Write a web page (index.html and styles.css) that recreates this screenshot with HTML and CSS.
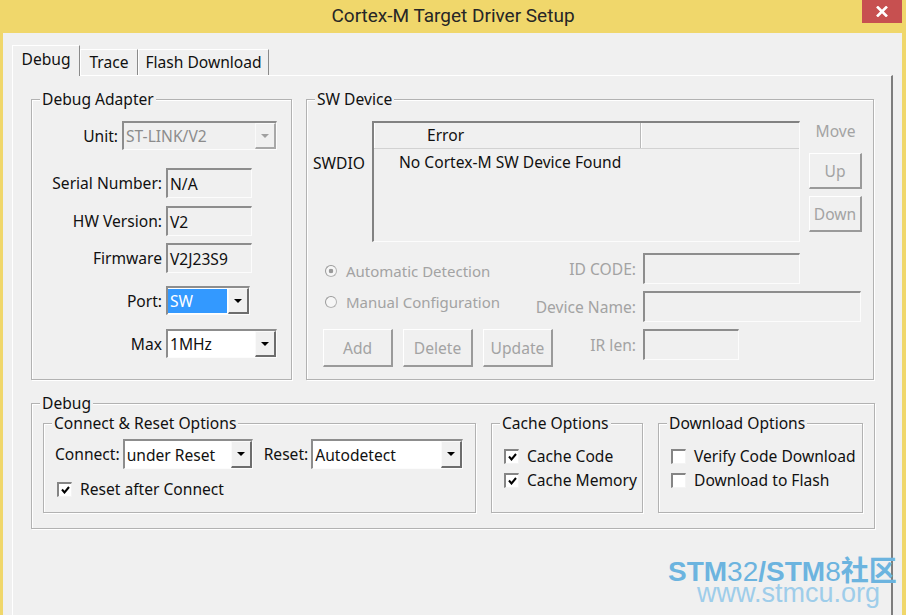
FILE: index.html
```html
<!DOCTYPE html>
<html>
<head>
  <title>Cortex-M Target Driver Setup</title>
  <link rel="stylesheet" href="styles.css">
</head>
<body>
  <div class="window">
    <div class="titlebar">
      <div class="title">Cortex-M Target Driver Setup</div>
      <div class="close">
        <svg width="12" height="11" viewBox="0 0 12 11"><path d="M1 0.5L11 10.5M11 0.5L1 10.5" stroke="#fff" stroke-width="2.6"/></svg>
      </div>
    </div>

    <div class="client">
      <div class="tabs">
        <div class="tab tab-debug active">Debug</div>
        <div class="tab tab-trace">Trace</div>
        <div class="tab tab-flash">Flash Download</div>
      </div>

      <div class="panel">
        <div class="top-row">
          <!-- Debug Adapter -->
          <fieldset class="group adapter">
            <legend>Debug Adapter</legend>
            <div class="form-row row-unit">
              <span class="lbl lbl-unit">Unit:</span>
              <div class="combo combo-unit disabled">
                <span class="combo-text">ST-LINK/V2</span>
                <span class="combo-btn"><svg width="8" height="4" viewBox="0 0 8 4"><path d="M0 0h8L4 4z"/></svg></span>
              </div>
            </div>
            <div class="form-row row-serial">
              <span class="lbl lbl-wide">Serial Number:</span>
              <div class="edit">N/A</div>
            </div>
            <div class="form-row row-hw">
              <span class="lbl lbl-wide">HW Version:</span>
              <div class="edit">V2</div>
            </div>
            <div class="form-row row-fw">
              <span class="lbl lbl-wide">Firmware</span>
              <div class="edit">V2J23S9</div>
            </div>
            <div class="form-row row-port">
              <span class="lbl lbl-wide">Port:</span>
              <div class="combo combo-port">
                <span class="combo-text selected">SW</span>
                <span class="combo-btn"><svg width="8" height="4" viewBox="0 0 8 4"><path d="M0 0h8L4 4z"/></svg></span>
              </div>
            </div>
            <div class="form-row row-max">
              <span class="lbl lbl-wide">Max</span>
              <div class="combo combo-max">
                <span class="combo-text">1MHz</span>
                <span class="combo-btn"><svg width="8" height="4" viewBox="0 0 8 4"><path d="M0 0h8L4 4z"/></svg></span>
              </div>
            </div>
          </fieldset>

          <!-- SW Device -->
          <fieldset class="group sw">
            <legend>SW Device</legend>
            <div class="sw-top">
              <div class="swdio">SWDIO</div>
              <div class="device-list">
                <div class="list-head">
                  <div class="head-cell head-error">Error</div>
                  <div class="head-cell head-rest"></div>
                </div>
                <div class="list-row">No Cortex-M SW Device Found</div>
              </div>
              <div class="move-col">
                <div class="move-label">Move</div>
                <button class="btn btn-move btn-up">Up</button>
                <button class="btn btn-move btn-down">Down</button>
              </div>
            </div>
            <div class="sw-bottom">
              <div class="radio radio-auto"><span class="radio-dot checked"></span>Automatic Detection</div>
              <span class="side-lbl">ID CODE:</span>
              <div class="edit edit-id"></div>

              <div class="radio radio-manual"><span class="radio-dot"></span>Manual Configuration</div>
              <span class="side-lbl">Device Name:</span>
              <div class="edit edit-name"></div>

              <div class="btn-row">
                <button class="btn btn-action">Add</button>
                <button class="btn btn-action">Delete</button>
                <button class="btn btn-action">Update</button>
              </div>
              <span class="side-lbl">IR len:</span>
              <div class="edit edit-ir"></div>
            </div>
          </fieldset>
        </div>

        <!-- Debug -->
        <fieldset class="group debug">
          <legend>Debug</legend>
          <div class="debug-row">
            <fieldset class="group sub sub-connect">
              <legend>Connect &amp; Reset Options</legend>
              <div class="connect-row">
                <span class="lbl">Connect:</span>
                <div class="combo combo-connect">
                  <span class="combo-text">under Reset</span>
                  <span class="combo-btn"><svg width="8" height="4" viewBox="0 0 8 4"><path d="M0 0h8L4 4z"/></svg></span>
                </div>
                <span class="lbl lbl-reset">Reset:</span>
                <div class="combo combo-reset">
                  <span class="combo-text">Autodetect</span>
                  <span class="combo-btn"><svg width="8" height="4" viewBox="0 0 8 4"><path d="M0 0h8L4 4z"/></svg></span>
                </div>
              </div>
              <div class="chk chk-reset">
                <span class="chk-box"><svg width="9" height="8" viewBox="0 0 9 8"><path d="M1 3.5L3.5 6.5L8 1" fill="none" stroke="#000" stroke-width="2"/></svg></span>
                Reset after Connect
              </div>
            </fieldset>

            <fieldset class="group sub sub-cache">
              <legend>Cache Options</legend>
              <div class="chk-list">
                <div class="chk">
                  <span class="chk-box"><svg width="9" height="8" viewBox="0 0 9 8"><path d="M1 3.5L3.5 6.5L8 1" fill="none" stroke="#000" stroke-width="2"/></svg></span>
                  Cache Code
                </div>
                <div class="chk">
                  <span class="chk-box"><svg width="9" height="8" viewBox="0 0 9 8"><path d="M1 3.5L3.5 6.5L8 1" fill="none" stroke="#000" stroke-width="2"/></svg></span>
                  Cache Memory
                </div>
              </div>
            </fieldset>

            <fieldset class="group sub sub-download">
              <legend>Download Options</legend>
              <div class="chk-list">
                <div class="chk">
                  <span class="chk-box"></span>
                  Verify Code Download
                </div>
                <div class="chk">
                  <span class="chk-box"></span>
                  Download to Flash
                </div>
              </div>
            </fieldset>
          </div>
        </fieldset>
      </div>
    </div>
  </div>

  <div class="watermark">
    <div class="wm-main"><b>STM</b><span class="thin">32</span><b>/STM</b><span class="thin">8</span><b class="cjk">社区</b></div>
    <div class="wm-url">www.stmcu.org</div>
  </div>
</body>
</html>
```

FILE: styles.css
```css
body {
  margin: 0;
  width: 906px;
  height: 615px;
  overflow: hidden;
  position: relative;
  background: #f0d76b;
  font-family: "Noto Sans", sans-serif;
  font-size: 15.6px;
  color: #111;
}

.window {
  display: flex;
  flex-direction: column;
  height: 615px;
}

/* title bar */
.titlebar {
  height: 33px;
  display: flex;
  padding-left: 44px;
  flex-shrink: 0;
}

.title {
  flex: 1;
  text-align: center;
  font-family: Roboto, sans-serif;
  font-size: 19px;
  line-height: 31px;
  color: #262626;
}

.close {
  width: 40px;
  height: 23px;
  margin-right: 4px;
  background: #c75050;
  display: flex;
  align-items: center;
  justify-content: center;
}

/* client area */
.client {
  flex: 1;
  min-height: 0;
  margin: 0 4px 0 3px;
  padding: 12px 0 0 9px;
  background: #f0f0f0;
  display: flex;
  flex-direction: column;
}

.tabs {
  display: flex;
  align-items: flex-end;
  height: 30px;
  flex-shrink: 0;
}

.tab {
  box-sizing: border-box;
  height: 26px;
  line-height: 24px;
  text-align: center;
  border-top: 1px solid #fff;
  border-left: 1px solid #fff;
  border-right: 1px solid #8a8a8a;
  background: #f0f0f0;
}

.tab-debug { width: 68px; }
.tab-trace { width: 58px; }
.tab-flash { width: 131px; }

.tab.active {
  height: 31px;
  line-height: 26px;
  margin-bottom: -1px;
  position: relative;
  z-index: 1;
}

.panel {
  flex: 1;
  box-sizing: border-box;
  width: 881px;
  padding: 14px 0 0 18px;
  border-top: 1px solid #fff;
  border-left: 1px solid #fff;
  border-right: 2px solid #7d7d7d;
}

/* group boxes */
.group {
  margin: 0;
  padding: 0;
  min-width: 0;
  box-sizing: border-box;
  border: 1px solid #b2b2b2;
  box-shadow: inset 1px 1px 0 #fff, 1px 1px 0 #fff;
}

.group legend {
  margin-left: 8px;
  padding: 0 2px;
  line-height: 18px;
  background: #f0f0f0;
}

.top-row {
  display: flex;
  gap: 14px;
}

.adapter {
  width: 261px;
  height: 290px;
}

.sw {
  width: 568px;
  height: 290px;
}

/* form rows */
.form-row {
  display: flex;
  align-items: center;
  gap: 4px;
}

.lbl {
  text-align: right;
  flex-shrink: 0;
  white-space: nowrap;
}

.lbl-unit { width: 86px; }
.lbl-wide { width: 130px; }

.row-unit { margin-top: 13px; }
.row-serial { margin-top: 18px; }
.row-hw { margin-top: 8px; }
.row-fw { margin-top: 7px; }
.row-port { margin-top: 13px; }
.row-max { margin-top: 14px; }

.edit {
  box-sizing: border-box;
  width: 86px;
  height: 30px;
  padding: 0 2px;
  display: flex;
  align-items: center;
  white-space: nowrap;
  overflow: hidden;
  background: #f0f0f0;
  border-style: solid;
  border-width: 2px 1px 1px 2px;
  border-color: #8d8d8d #fcfcfc #fcfcfc #8d8d8d;
}

.combo {
  box-sizing: border-box;
  height: 29px;
  display: flex;
  background: #fff;
  border-style: solid;
  border-width: 2px 1px 1px 2px;
  border-color: #8d8d8d #fcfcfc #fcfcfc #8d8d8d;
}

.combo-text {
  flex: 1;
  padding-left: 2px;
  display: flex;
  align-items: center;
  white-space: nowrap;
  overflow: hidden;
}

.combo-text.selected {
  background: #3399ff;
  color: #fff;
  margin: 1px 1px 1px 0;
}

.combo-btn {
  box-sizing: border-box;
  width: 21px;
  display: flex;
  align-items: center;
  justify-content: center;
  background: #f0f0f0;
  border-style: solid;
  border-width: 1px 2px 2px 1px;
  border-color: #fafafa #6d6d6d #6d6d6d #fafafa;
}

.combo-btn svg { fill: #000; }

.combo.disabled {
  background: #f0f0f0;
  color: #8c8c8c;
}

.combo.disabled .combo-btn {
  border-color: #fafafa #a8a8a8 #a8a8a8 #fafafa;
}

.combo.disabled .combo-btn svg { fill: #a0a0a0; }

.combo-unit { width: 155px; }
.combo-port { width: 84px; }
.combo-max { width: 111px; }
.combo-connect { width: 130px; height: 30px; }
.combo-reset { width: 152px; height: 30px; }

/* SW device */
.sw-top {
  display: flex;
  margin-top: 13px;
}

.swdio {
  box-sizing: border-box;
  width: 65px;
  padding: 31px 0 0 6px;
}

.device-list {
  box-sizing: border-box;
  width: 428px;
  height: 121px;
  background: #f0f0f0;
  border-style: solid;
  border-width: 2px 1px 1px 2px;
  border-color: #828282 #fcfcfc #fcfcfc #828282;
}

.list-head {
  display: flex;
  height: 25px;
  border-bottom: 1px solid #d2d2d2;
}

.head-cell {
  line-height: 24px;
  border-right: 1px solid #b9b9b9;
  box-shadow: inset 1px 0 0 #fff;
}

.head-error {
  box-sizing: border-box;
  width: 267px;
  padding-left: 53px;
}

.head-rest {
  flex: 1;
  border-right: 0;
}

.list-row {
  padding-left: 25px;
  line-height: 27px;
}

.move-col {
  width: 53px;
  margin-left: 9px;
  display: flex;
  flex-direction: column;
}

.move-label {
  height: 20px;
  line-height: 20px;
  text-align: center;
  color: #a3a3a3;
}

.btn {
  box-sizing: border-box;
  padding: 0;
  font: inherit;
  color: #a3a3a3;
  background: #f0f0f0;
  border-style: solid;
  border-width: 1px 2px 2px 1px;
  border-color: #fff #9a9a9a #9a9a9a #fff;
}

.btn-move { height: 36px; }
.btn-up { margin-top: 12px; }
.btn-down { margin-top: 7px; }

.sw-bottom {
  display: grid;
  grid-template-columns: 210px 110px auto;
  grid-template-rows: 31px 31px 31px;
  row-gap: 7px;
  margin-top: 11px;
  padding-left: 16px;
}

.radio {
  display: flex;
  align-items: center;
  gap: 9px;
  padding-left: 2px;
  font-size: 15px;
  color: #a3a3a3;
  white-space: nowrap;
}

.radio-auto { margin-top: 5px; }
.radio-manual { margin-bottom: 9px; }

.radio-dot {
  box-sizing: border-box;
  width: 12px;
  height: 12px;
  border-radius: 50%;
  border: 1px solid #b4b4b4;
  border-top-color: #9a9a9a;
  border-left-color: #9a9a9a;
  background: #f6f6f6;
}

.radio-dot.checked {
  background: radial-gradient(circle, #9a9a9a 0 2px, #f6f6f6 2.6px);
}

.side-lbl {
  align-self: center;
  text-align: right;
  padding-right: 7px;
  color: #a3a3a3;
  white-space: nowrap;
}

.edit-id { width: 157px; height: 31px; }
.edit-name { width: 218px; height: 31px; }
.edit-ir { width: 96px; height: 31px; }

.btn-row {
  display: flex;
  gap: 10px;
  width: max-content;
}

.btn-action {
  width: 70px;
  height: 38px;
}

/* Debug group */
.debug {
  width: 844px;
  height: 135px;
  margin-top: 14px;
}

.debug-row {
  display: flex;
  gap: 15px;
  margin-top: 2px;
  padding-left: 11px;
}

.sub { height: 99px; }
.sub-connect { width: 433px; }
.sub-cache { width: 152px; }
.sub-download { width: 205px; }

.connect-row {
  display: flex;
  align-items: center;
  gap: 3px;
  margin-top: 7px;
  padding-left: 11px;
}

.lbl-reset { margin-left: 8px; }

.chk {
  display: flex;
  align-items: center;
  gap: 8px;
  height: 24px;
  white-space: nowrap;
}

.chk-box {
  box-sizing: border-box;
  width: 15px;
  height: 15px;
  flex-shrink: 0;
  display: flex;
  align-items: center;
  justify-content: center;
  background: #fff;
  border-style: solid;
  border-width: 2px 1px 1px 2px;
  border-color: #858585 #f4f4f4 #f4f4f4 #858585;
}

.chk-reset {
  height: 20px;
  margin-top: 10px;
  margin-left: 13px;
}

.chk-list {
  margin-top: 12px;
  padding-left: 12px;
}

/* watermark */
.watermark {
  position: absolute;
  left: 668px;
  top: 557px;
  font-family: "Liberation Sans", Arial, sans-serif;
  color: #6cb4df;
}

.wm-main {
  font-size: 28px;
  line-height: 24px;
  white-space: nowrap;
}

.wm-main .thin { font-weight: normal; }
.wm-main .cjk { font-family: "Noto Sans CJK SC", sans-serif; }

.wm-url {
  margin-left: 29px;
  font-size: 27px;
  line-height: 18px;
  color: #9ecdea;
}
```
